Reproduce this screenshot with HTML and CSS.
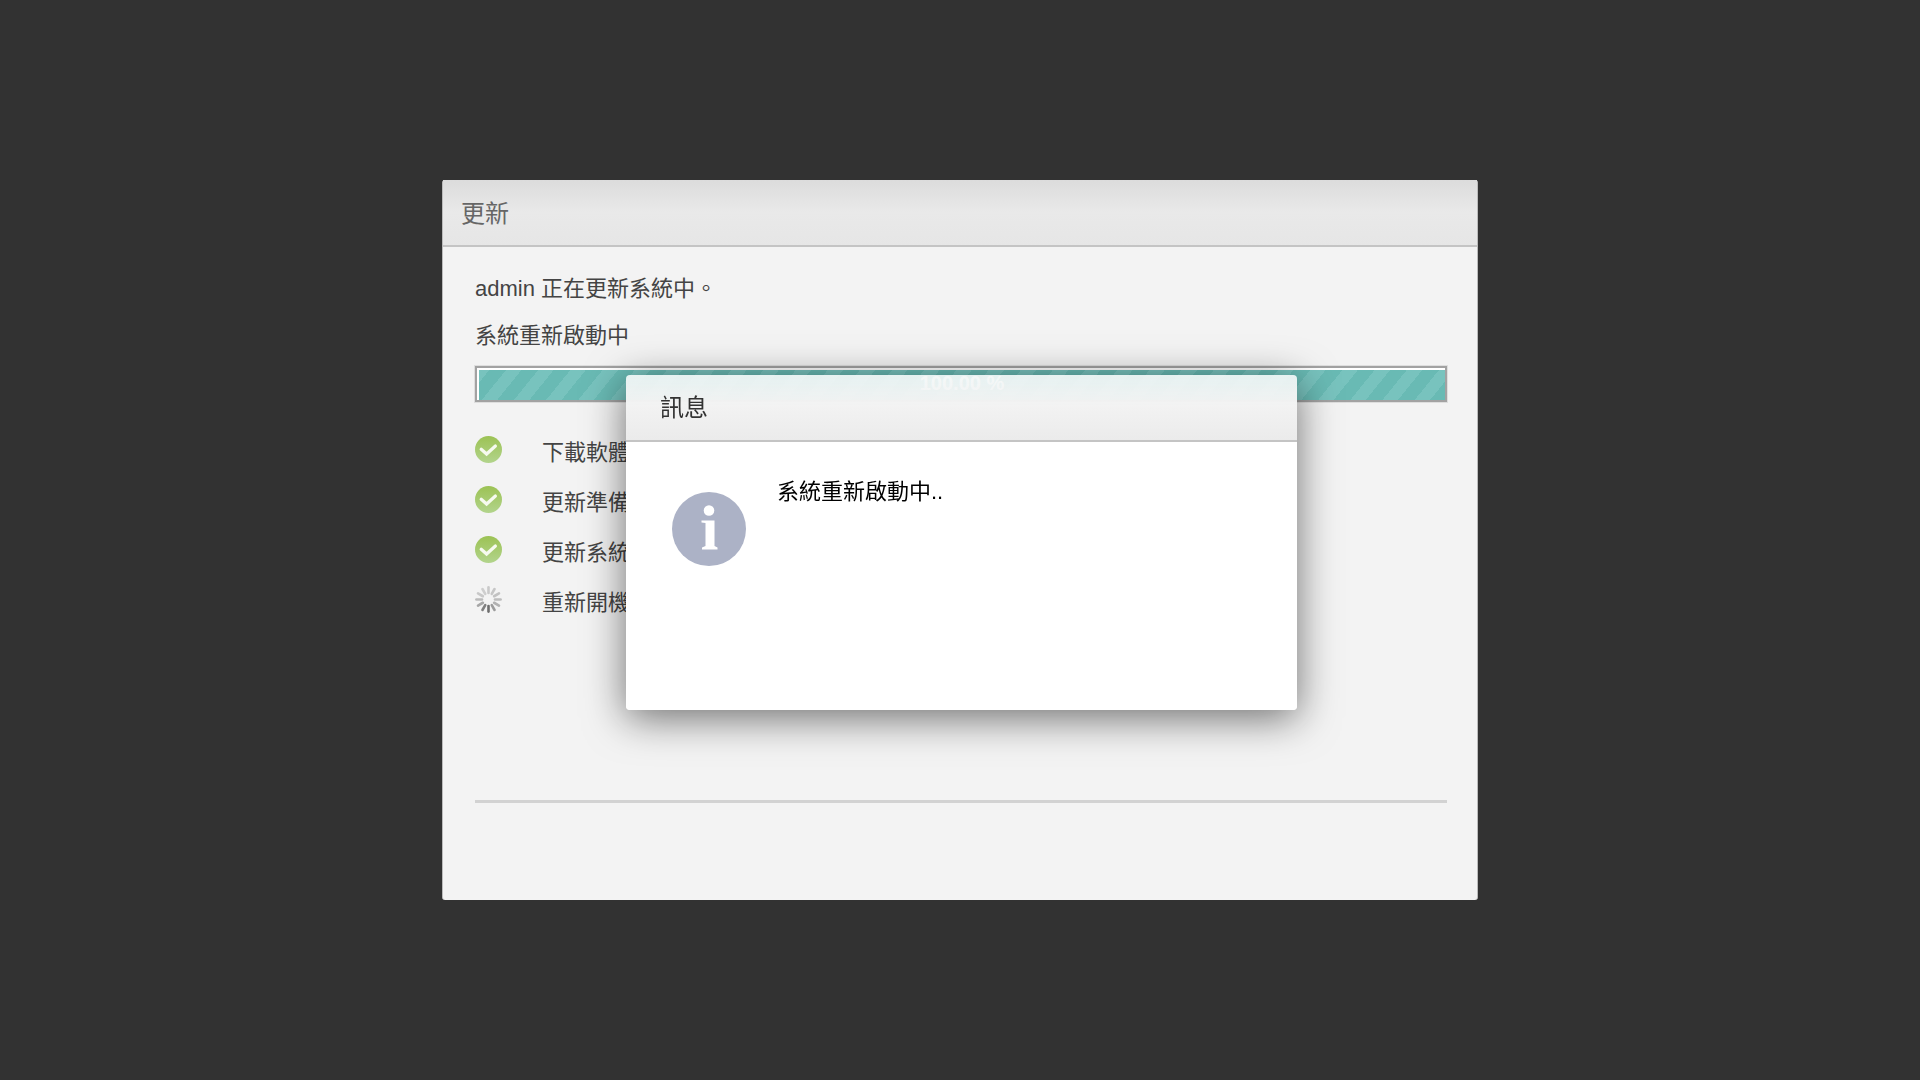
FILE: index.html
```html
<!DOCTYPE html>
<html lang="zh-Hant">
<head>
<meta charset="utf-8">
<meta name="viewport" content="width=device-width, initial-scale=1">
<title>更新</title>
<link rel="stylesheet" href="styles.css">
</head>
<body>
<svg class="sprite" aria-hidden="true">
  <defs>
    <linearGradient id="green" x1="0" y1="0" x2="0" y2="1">
      <stop offset="0" stop-color="#9cc254"/>
      <stop offset="1" stop-color="#b2d48c"/>
    </linearGradient>
    <symbol id="done" viewBox="0 0 27 27">
      <circle cx="13.5" cy="13.5" r="13.5" fill="url(#green)"/>
      <path d="M6.2 13.2 11.6 18 20.4 10" fill="none" stroke="#f6faef" stroke-width="3.2" stroke-linecap="round" stroke-linejoin="miter"/>
    </symbol>
  </defs>
</svg>
<main class="page">
  <section class="panel">
    <header class="panel-head"><h1 class="title">更新</h1></header>
    <div class="panel-body">
      <p class="line">admin 正在更新系統中。</p>
      <p class="line" id="status">系統重新啟動中</p>
      <div class="bar" role="progressbar" aria-labelledby="status" aria-valuenow="100" aria-valuemin="0" aria-valuemax="100">
        <div class="fill" style="width:100%">100.00 %</div>
      </div>
      <ul class="steps">
        <li class="step"><svg class="icon"><use href="#done"/></svg><span>下載軟體</span></li>
        <li class="step"><svg class="icon"><use href="#done"/></svg><span>更新準備</span></li>
        <li class="step"><svg class="icon"><use href="#done"/></svg><span>更新系統</span></li>
        <li class="step">
          <svg class="icon" viewBox="0 0 27 27" stroke-width="2.6" stroke-linecap="round">
            <path d="M13.5 1.4V7" stroke="#c9c9c9"/>
            <path d="M13.5 1.4V7" stroke="#c6c6c6" transform="rotate(30 13.5 13.5)"/>
            <path d="M13.5 1.4V7" stroke="#c2c2c2" transform="rotate(60 13.5 13.5)"/>
            <path d="M13.5 1.4V7" stroke="#bdbdbd" transform="rotate(90 13.5 13.5)"/>
            <path d="M13.5 1.4V7" stroke="#b2b2b2" transform="rotate(120 13.5 13.5)"/>
            <path d="M13.5 1.4V7" stroke="#9c9c9c" transform="rotate(150 13.5 13.5)"/>
            <path d="M13.5 1.4V7" stroke="#6e6e6e" transform="rotate(180 13.5 13.5)"/>
            <path d="M13.5 1.4V7" stroke="#808080" transform="rotate(210 13.5 13.5)"/>
            <path d="M13.5 1.4V7" stroke="#a6a6a6" transform="rotate(240 13.5 13.5)"/>
            <path d="M13.5 1.4V7" stroke="#bababa" transform="rotate(270 13.5 13.5)"/>
            <path d="M13.5 1.4V7" stroke="#c8c8c8" transform="rotate(300 13.5 13.5)"/>
            <path d="M13.5 1.4V7" stroke="#cecece" transform="rotate(330 13.5 13.5)"/>
          </svg>
          <span>重新開機</span>
        </li>
      </ul>
      <hr class="rule">
    </div>
  </section>
</main>
<div class="overlay">
  <section class="dialog" role="dialog" aria-labelledby="dialog-title">
    <header class="dialog-head"><h2 class="title" id="dialog-title">訊息</h2></header>
    <div class="dialog-body">
      <svg class="info" viewBox="0 0 74 74" aria-hidden="true">
        <circle cx="37" cy="37" r="37" fill="#acb2c6"/>
        <circle cx="37" cy="18.5" r="5.3" fill="#fff"/>
        <path d="M29.500 28.500H42.500V54L45.500 55.500V57.500H30V55.500L33.500 54V31L29.500 30.500Z" fill="#fff"/>
      </svg>
      <p class="message">系統重新啟動中..</p>
    </div>
  </section>
</div>
</body>
</html>
```
FILE: styles.css
```css
* {
  box-sizing: border-box;
}

body {
  margin: 0;
  background: #323232;
  color: #444;
  font: 22px/32px "Liberation Sans", "Noto Sans CJK TC", sans-serif;
}

h1, h2, p, ul {
  margin: 0;
  padding: 0;
}

.sprite {
  position: absolute;
  width: 0;
  height: 0;
}

.page {
  display: grid;
  place-items: center;
  min-height: 100vh;
}

.panel {
  display: flex;
  flex-direction: column;
  width: 100%;
  max-width: 1036px;
  min-height: 720px;
  border: solid #bbb;
  border-width: 0 1px;
  border-radius: 3px;
  background: #f3f3f3;
}

.panel-head {
  padding: 17px 18px 14px;
  border-bottom: 2px solid #c4c4c4;
  background: linear-gradient(#dcdcdc, #e9e9e9 50%, #e6e6e6);
  color: #666;
}

.title {
  font-size: 24px;
  font-weight: 400;
  line-height: 34px;
}

.panel-body {
  display: flex;
  flex: 1;
  flex-direction: column;
  padding: 11px 30px 97px 32px;
}

.line {
  margin-top: 15px;
}

.bar {
  margin-top: 14px;
  padding: 2px 0 0 2px;
  border: 2px solid #a2a2a2;
  background: #fff;
  box-shadow: 0 0 0 1px #dedede;
}

.fill {
  height: 30px;
  background: repeating-linear-gradient(129deg, #78c3be 0 8px, #69bab4 8px 21px, #78c3be 21px 25px);
  color: #fff;
  font-size: 20px;
  font-weight: 700;
  line-height: 26px;
  text-align: center;
}

.steps {
  display: grid;
  gap: 16px;
  margin-top: 34px;
  line-height: 34px;
  list-style: none;
}

.step {
  display: flex;
  gap: 40px;
}

.icon {
  width: 27px;
  height: 27px;
}

.rule {
  width: 100%;
  margin: auto 0 0;
  border: 0;
  border-top: 3px solid #d2d2d2;
}

.overlay {
  position: fixed;
  inset: 0;
  display: grid;
  place-items: center;
  padding: 5px 0 0 3px;
}

.dialog {
  width: 100%;
  max-width: 671px;
  min-height: 335px;
  border-radius: 4px;
  background: linear-gradient(transparent 67px, #fff 67px);
  box-shadow: 0 8px 40px rgba(0, 0, 0, 0.55);
}

.dialog-head {
  padding: 16px 34px 15px;
  border-bottom: 2px solid #c4c4c4;
  border-radius: 4px 4px 0 0;
  background: linear-gradient(rgba(243, 247, 247, 0.9), #f2f2f2 50%, #ebebeb);
  color: #333;
}

.dialog-body {
  display: flex;
  gap: 31px;
  padding: 34px 46px;
}

.info {
  width: 74px;
  height: 74px;
  margin-top: 16px;
}

.message {
  color: #000;
}
```
